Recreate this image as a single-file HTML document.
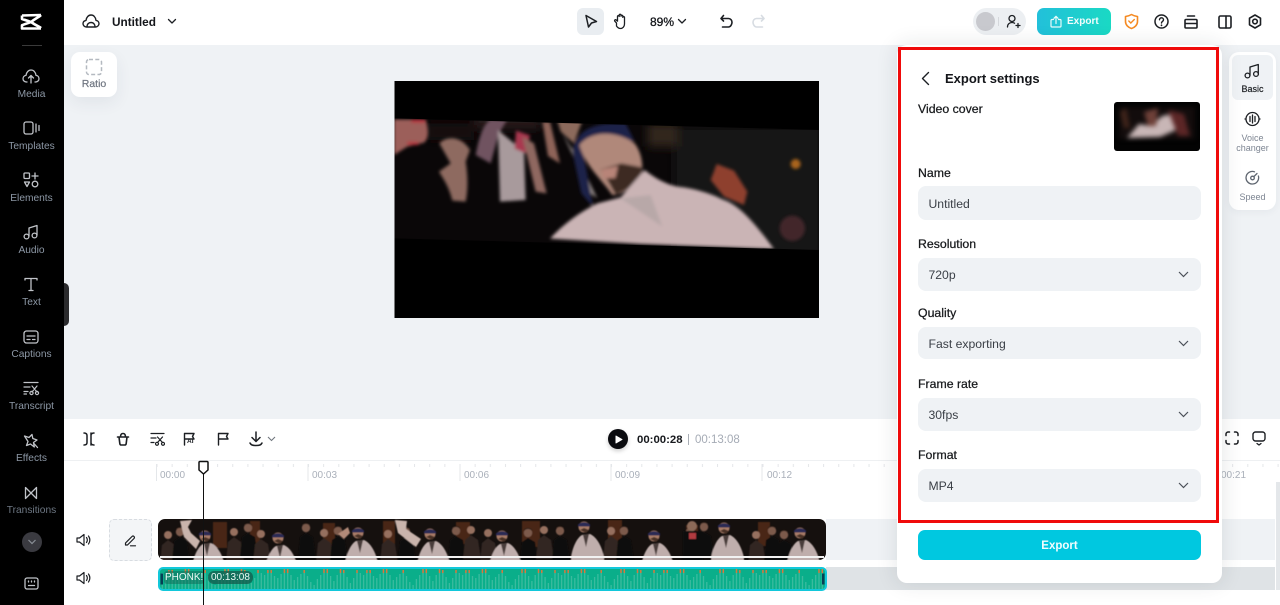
<!DOCTYPE html>
<html lang="en"><head><meta charset="utf-8"><title>Export settings</title>
<style>
html,body{margin:0;padding:0;width:1280px;height:605px;overflow:hidden;background:#fff;font-family:"Liberation Sans",sans-serif}
#r{position:relative;width:1280px;height:605px;overflow:hidden}
#r div,#r svg,#r span{position:absolute}
.t{white-space:nowrap;line-height:14px}
.s{left:0;width:63px;text-align:center;font-size:10.2px;color:#8d98a6}
.i{fill:none;stroke:#c0c3c8;stroke-width:1.3;stroke-linecap:round;stroke-linejoin:round}
.k{fill:none;stroke:#1c1f23;stroke-width:1.6;stroke-linecap:round;stroke-linejoin:round}
.lb{left:918px;font-size:12.3px;color:#17191c;-webkit-text-stroke:.25px #17191c}
.f{left:918px;width:283px;background:#eff2f5;border-radius:8px}
.v{left:928.5px;font-size:12.2px;color:#3a3f46}
.rl{font-size:10px;color:#aab0ba;top:469px}
</style></head><body><div id="r">

<!-- canvas -->
<div style="left:64px;top:45px;width:1216px;height:374px;background:#eff2f5"></div>
<!-- top bar -->
<div style="left:64px;top:0;width:1216px;height:45px;background:#fff"></div>

<!-- sidebar -->
<div style="left:0;top:0;width:64px;height:605px;background:#000"></div>
<div style="left:64px;top:283px;width:5px;height:43px;background:#2b2b2d;border-radius:0 6px 6px 0"></div>
<svg style="left:20px;top:12px" width="24" height="20" viewBox="0 0 24 20"><path d="M2 3.500 21 3M2 3.500v3.500l9 3-9 3.200v3.300h19M21 3c-1 1.500-5 3-10 7 5 3.500 9 5 10 6M2 7c4 1 6 2 9 3" fill="none" stroke="#fff" stroke-width="2.600" stroke-linejoin="round"/></svg>
<div style="left:22px;top:45px;width:20px;height:1px;background:#3a3a3a"></div>

<svg class="i" style="left:22px;top:68px" width="18" height="16" viewBox="0 0 18 16"><path d="M5 14H4.500C2.500 14 1 12.500 1 10.700S2.400 7.600 4 7.400C4.400 4.200 6.500 2 9 2s4.600 2 5 5.400c1.700.2 3 1.500 3 3.300S15.500 14 13.500 14H13M9 15V8M6.500 10 9 7.500l2.500 2.500"/></svg>
<div class="t s" style="top:88px">Media</div>
<svg class="i" style="left:23px;top:120px" width="18" height="16" viewBox="0 0 18 16"><rect x="1" y="2" width="9" height="12" rx="2"/><path d="M13 4v8M16 5.500v5"/></svg>
<div class="t s" style="top:140px">Templates</div>
<svg class="i" style="left:23px;top:172px" width="16" height="16" viewBox="0 0 16 16"><rect x="1" y="1" width="5.500" height="5.500" rx="1"/><path d="M12 1v6M9 4h6M1.500 10h5L4 14.500z"/><circle cx="12" cy="12" r="2.800"/></svg>
<div class="t s" style="top:192px">Elements</div>
<svg class="i" style="left:23px;top:224px" width="16" height="16" viewBox="0 0 16 16"><circle cx="3.500" cy="12.500" r="2.400"/><circle cx="11.500" cy="11.500" r="2.400"/><path d="M6 12V4l8-2.500V11"/></svg>
<div class="t s" style="top:244px">Audio</div>
<svg class="i" style="left:24px;top:277px" width="14" height="15" viewBox="0 0 14 15"><path d="M1 3V1.500h12V3M7 1.500V13.500M5 13.500h4"/></svg>
<div class="t s" style="top:296px">Text</div>
<svg class="i" style="left:23px;top:330px" width="16" height="14" viewBox="0 0 16 14"><rect x="1" y="1" width="14" height="12" rx="2.500"/><path d="M4 6h8M4 9.500h3M9.500 9.500H12"/></svg>
<div class="t s" style="top:348px">Captions</div>
<svg class="i" style="left:23px;top:381px" width="17" height="15" viewBox="0 0 17 15"><path d="M1 1.500h14M1 6h6M1 10.500h4M1 13h2.500M9 5l5 6M14 5 9 11" stroke-width="1.200"/><circle cx="8.500" cy="12" r="1.600" stroke-width="1.200"/><circle cx="14" cy="12" r="1.600" stroke-width="1.200"/></svg>
<div class="t s" style="top:400px">Transcript</div>
<svg class="i" style="left:23px;top:433px" width="16" height="16" viewBox="0 0 16 16"><path d="M1.500 3 6 4.500 9 1.500l.8 4 4.200 1.500-3.500 2.500.8 4.500-3.800-3-4 1.500 1.500-4zM10.500 10l4 4.500"/></svg>
<div class="t s" style="top:452px">Effects</div>
<svg class="i" style="left:24px;top:486px" width="14" height="14" viewBox="0 0 14 14"><path d="M1.500 1.500 7 7l5.500-5.500v11L7 7l-5.500 5.500z"/></svg>
<div class="t s" style="top:504px;color:#6d7783">Transitions</div>
<div style="left:22px;top:532px;width:20px;height:20px;border-radius:50%;background:#3a3a40"></div>
<svg style="left:27px;top:539px" width="10" height="6" viewBox="0 0 10 6"><path d="M1.500 1 5 4.500 8.500 1" fill="none" stroke="#8a8f96" stroke-width="1.200"/></svg>
<svg class="i" style="left:24px;top:577px" width="15" height="13" viewBox="0 0 15 13"><rect x="1" y="1" width="13" height="11" rx="2"/><path d="M4.500 4v1M7.500 4v1M10.500 4v1M4.500 8.500h6"/></svg>

<!-- top bar left -->
<svg class="k" style="left:82px;top:13px" width="18" height="16" viewBox="0 0 18 16"><path d="M4.500 14C2.500 14 1 12.500 1 10.600S2.400 7.700 4 7.400C4.400 4.200 6.500 2 9 2s4.600 2 5 5.400c1.700.2 3 1.500 3 3.200S15.500 14 13.500 14zM5 14c0-3 1.800-4.500 4-4.500 2.500 0 4 1.800 4 4.500" stroke-width="1.400"/></svg>
<div class="t" style="left:112px;top:15px;font-size:11.800px;font-weight:700;color:#14161a">Untitled</div>
<svg class="k" style="left:167px;top:18px;stroke-width:1.300" width="10" height="7" viewBox="0 0 10 7"><path d="M1.500 1.500 5 5l3.500-3.500"/></svg>
<!-- Ratio -->
<div style="left:71px;top:52px;width:46px;height:45px;background:#fff;border-radius:9px;box-shadow:0 6px 16px rgba(40,60,80,.07)"></div>
<svg style="left:85px;top:58px" width="18" height="18" viewBox="0 0 18 18"><rect x="1.500" y="1.500" width="15" height="15" rx="2.500" fill="none" stroke="#b4b9c0" stroke-width="1.500" stroke-dasharray="4 2.300"/></svg>
<div class="t" style="left:71px;width:46px;text-align:center;top:77px;font-size:10.500px;color:#6f7580;-webkit-text-stroke:.2px #6f7580">Ratio</div>

<!-- top center -->
<div style="left:577px;top:8px;width:27px;height:27px;background:#e9edf1;border-radius:6px"></div>
<svg class="k" style="left:584px;top:14px" width="14" height="15" viewBox="0 0 14 15"><path d="M2 1.500 12.500 7.500 7.500 9 4.500 13zM2 1.500l2.500 11.500" stroke-width="1.500"/></svg>
<svg class="k" style="left:613px;top:13px" width="15" height="17" viewBox="0 0 15 17"><path d="M3.500 10 1.800 8.200c-.8-.9.500-2 1.400-1.200L4.500 8.200V3.500c0-1.200 1.700-1.200 1.700 0V2.200c0-1.200 1.800-1.200 1.800 0v1c0-1.200 1.800-1.200 1.800 0v1.200c0-1.100 1.700-1.100 1.700.1v6.500c0 2.500-1.800 4.500-4 4.500-2 0-3-1-4-2.500z" stroke-width="1.300"/></svg>
<div class="t" style="left:650px;top:15px;font-size:12px;color:#14161a;-webkit-text-stroke:.3px #14161a">89%</div>
<svg class="k" style="left:677px;top:18px;stroke-width:1.300" width="10" height="7" viewBox="0 0 10 7"><path d="M1.500 1.500 5 5l3.500-3.500"/></svg>
<svg class="k" style="left:719px;top:14px" width="14" height="15" viewBox="0 0 14 15"><path d="M4.500 1.500 2 4.500h7.500c2 0 3.500 1.700 3.500 3.800S11.500 13 9.500 13H3.500M2 4.500l2.500 2.500"/></svg>
<svg class="k" style="left:752px;top:14px;stroke:#d7dce2" width="14" height="15" viewBox="0 0 14 15"><path d="M9.500 1.500 12 4.500H4.500C2.500 4.500 1 6.200 1 8.300S2.500 13 4.500 13h6M12 4.500 9.500 7"/></svg>

<!-- top right -->
<div style="left:973px;top:8px;width:53px;height:27px;background:#eceff2;border-radius:14px"></div>
<div style="left:976px;top:12px;width:19px;height:19px;background:#c8c9ce;border-radius:50%"></div>
<div style="left:998px;top:17px;width:1px;height:9px;background:#d5d8dc"></div>
<svg class="k" style="left:1006px;top:14px" width="15" height="15" viewBox="0 0 15 15"><circle cx="6" cy="4.500" r="3" stroke-width="1.300"/><path d="M1.500 13c0-2.800 2-4.500 4.500-4.500 1 0 1.800.2 2.500.7M10 11.500h4M12 9.500v4" stroke-width="1.300"/></svg>
<div style="left:1037px;top:8px;width:74px;height:27px;border-radius:7px;background:linear-gradient(90deg,#22c0da,#1ad9c4)"></div>
<svg style="left:1050px;top:15px" width="12" height="13" viewBox="0 0 12 13"><path d="M3.500 4.500H2c-.5 0-1 .5-1 1V11c0 .6.500 1 1 1h8c.5 0 1-.4 1-1V5.500c0-.5-.5-1-1-1H8.500M6 8.500V1.500M4 3.300 6 1.300l2 2" fill="none" stroke="#e8fbfa" stroke-width="1.200" stroke-linecap="round" stroke-linejoin="round"/></svg>
<div class="t" style="left:1067px;top:15px;font-size:10px;color:#f2fdfc;font-weight:700">Export</div>
<svg style="left:1124px;top:13px" width="15" height="17" viewBox="0 0 15 17"><path d="M7.500 1.500c2 1.200 3.800 1.800 6 2v5c0 3.500-2.800 6-6 7-3.200-1-6-3.500-6-7v-5c2.200-.2 4-.8 6-2z" fill="none" stroke="#f58a22" stroke-width="1.600" stroke-linejoin="round"/><path d="M4.800 8 6.800 10l3.500-3.500" fill="none" stroke="#f58a22" stroke-width="1.400" stroke-linecap="round"/></svg>
<svg class="k" style="left:1154px;top:14px" width="15" height="15" viewBox="0 0 15 15"><circle cx="7.500" cy="7.500" r="6.500" stroke-width="1.500"/><path d="M5.500 5.800c0-1.200 1-2 2-2s2 .8 2 1.900c0 1.700-2 1.700-2 3.300" stroke-width="1.400"/><path d="M7.500 11.200v.2" stroke-width="1.700"/></svg>
<svg class="k" style="left:1184px;top:15px" width="14" height="14" viewBox="0 0 14 14"><path d="M3.500 1h7M2 4.500h10M2 4.500c-.6 0-1 .5-1 1V12c0 .6.400 1 1 1h10c.6 0 1-.4 1-1V5.500c0-.5-.4-1-1-1M1 8.500h12"/></svg>
<svg class="k" style="left:1218px;top:15px" width="14" height="14" viewBox="0 0 14 14"><rect x="1" y="1" width="12" height="12" rx="1.500"/><path d="M8 1v12"/></svg>
<svg class="k" style="left:1248px;top:14px" width="14" height="15" viewBox="0 0 14 15"><path d="M7 1l5.500 3.200v6.600L7 14l-5.500-3.200V4.200z"/><circle cx="7" cy="7.500" r="2.300"/></svg>

<!-- video preview -->
<svg style="left:394px;top:80px" width="426" height="239" viewBox="0 0 1278 717">
<defs><clipPath id="b"><path d="M1.500 115 1275 150V510L1.500 475z"/></clipPath><filter id="bl" x="-10%" y="-10%" width="120%" height="120%"><feGaussianBlur stdDeviation="5"/></filter><filter id="bl2" x="-20%" y="-20%" width="140%" height="140%"><feGaussianBlur stdDeviation="14"/></filter></defs>
<rect x="1.500" y="3" width="1273.500" height="711" fill="#000"/>
<g clip-path="url(#b)">
<rect width="1278" height="717" fill="#0a0708"/>
<g filter="url(#bl2)"><rect x="840" y="140" width="440" height="380" fill="#121513"/><rect x="760" y="130" width="90" height="70" fill="#33281a"/><rect x="240" y="105" width="200" height="40" fill="#2a1f1f"/><rect x="100" y="130" width="140" height="50" fill="#141010"/></g>
<g filter="url(#bl)">
<path d="M0 118H95C105 150 105 175 90 188L40 200 0 225z" fill="#9c5e5a"/>
<path d="M52 118h42v10H52zM40 186h34v9H40z" fill="#b8303c"/>
<path d="M136 190C160 165 205 170 228 210L215 245C222 290 222 330 215 365L175 362C165 320 150 300 135 275L170 250z" fill="#8e6a60"/>
<path d="M245 225C255 175 265 135 290 118H340L315 160 290 250z" fill="#6f5260"/>
<path d="M312 150 390 215 395 360 318 365z" fill="#a89a9c"/>
<path d="M366 152 408 166 396 220 362 206z" fill="#a83850"/>
<path d="M385 170 420 190 458 340 425 335z" fill="#8f6860"/>
<path d="M445 125 468 125 498 250 462 228z" fill="#8e6458"/>
<path d="M490 122H565L540 190 500 155z" fill="#8c6a5c"/>
<path d="M505 160 590 340 610 355 560 250z" fill="#8f8684"/>
<path d="M535 215C545 150 600 125 695 130L722 185 600 165 570 230 598 382 562 340z" fill="#1e2048"/>
<path d="M556 195C590 152 665 150 722 190 745 220 750 265 740 295 700 335 675 345 655 345 625 300 575 260 556 195z" fill="#b0887a"/>
<path d="M620 268 682 250 746 262 735 310 665 345 640 300z" fill="#3c2b22"/>
<path d="M622 268 672 258 664 294 628 296z" fill="#b88478"/>
<path d="M468 476C510 430 560 395 610 370L680 352 752 270C790 300 830 320 870 322 920 330 960 345 985 358 1040 375 1090 440 1140 507L740 492z" fill="#cab4b5"/>
<path d="M680 355 805 440 770 345z" fill="#b8a8a8"/>
<path d="M950 300 968 252 1020 272 1060 335 1050 375 990 350z" fill="#8e3f2e"/>
<circle cx="1195" cy="445" r="38" fill="#43252a"/>
<circle cx="1205" cy="252" r="15" fill="#a8641c"/>
</g>
</g>
</svg>

<!-- timeline toolbar -->
<svg class="k" style="left:82px;top:432px" width="14" height="14" viewBox="0 0 14 14"><path d="M2 1c2 0 3 1 3 2.500v7C5 12 4 13 2 13M12 1c-2 0-3 1-3 2.500v7c0 1.500 1 2.500 3 2.500M9 1v12" stroke-width="1.500"/></svg>
<svg class="k" style="left:116px;top:432px" width="14" height="14" viewBox="0 0 14 14"><path d="M1.500 5h11M3 5l.8 6.500c.1.900.7 1.500 1.500 1.500h3.400c.8 0 1.400-.6 1.500-1.500L11 5M4.500 5C4.500 2.800 5.500 1.500 7 1.500S9.500 2.800 9.500 5"/></svg>
<svg class="k" style="left:150px;top:432px" width="15" height="14" viewBox="0 0 15 14"><path d="M1 1.500h13M1 6h5M1 10.500h3M7.500 5l5 5.500M12.500 5l-5 5.500" stroke-width="1.200"/><circle cx="7" cy="11.800" r="1.500" stroke-width="1.200"/><circle cx="13" cy="11.800" r="1.500" stroke-width="1.200"/></svg>
<svg class="k" style="left:183px;top:432px" width="13" height="14" viewBox="0 0 13 14"><path d="M1.500 13V1.500H11L9.500 4.500 11 7H1.500" stroke-width="1.400"/></svg>
<div class="t" style="left:187px;top:438px;font-size:6.500px;line-height:8px;font-weight:700;color:#1c1f23">AI</div>
<svg class="k" style="left:217px;top:432px" width="13" height="14" viewBox="0 0 13 14"><path d="M1.500 13V1.500H11L9.500 4.500 11 7H1.500" stroke-width="1.400"/></svg>
<svg class="k" style="left:249px;top:431px" width="14" height="16" viewBox="0 0 14 16"><path d="M7 1v9M3 6.500 7 10.500l4-4M1 12c1 2 2.500 2.500 6 2.500s5-.5 6-2.500" stroke-width="1.500"/></svg>
<svg style="left:267px;top:436px" width="9" height="6" viewBox="0 0 9 6"><path d="M1 1l3.500 3.500L8 1" fill="none" stroke="#70767e" stroke-width="1.100"/></svg>

<div style="left:608px;top:429px;width:20px;height:20px;border-radius:50%;background:#0a0b0f;box-shadow:0 2px 4px rgba(0,0,0,.2)"></div>
<svg style="left:615px;top:435px" width="8" height="9" viewBox="0 0 8 9"><path d="M1 1v7l6-3.500z" fill="#fff" stroke="#fff" stroke-linejoin="round"/></svg>
<div class="t" style="left:637px;top:433px;font-size:11.400px;font-weight:700;color:#17191d">00:00:28</div>
<div style="left:688px;top:434px;width:1px;height:11px;background:#a8adb5"></div>
<div class="t" style="left:695px;top:433px;font-size:11.500px;color:#a5abb5">00:13:08</div>
<svg class="k" style="left:1225px;top:431px" width="14" height="14" viewBox="0 0 14 14"><path d="M1 4.500V3c0-1 1-2 2-2h1.500M9.500 1H11c1 0 2 1 2 2v1.500M13 9.500V11c0 1-1 2-2 2H9.500M4.500 13H3c-1 0-2-1-2-2V9.500" stroke-width="1.500"/></svg>
<svg class="k" style="left:1252px;top:431px" width="14" height="15" viewBox="0 0 14 15"><rect x="1" y="1" width="12" height="9" rx="2.500" stroke-width="1.400"/><path d="M5 12.500l2 1.500 2-1.500" stroke-width="1.300"/></svg>

<!-- ruler -->
<div style="left:64px;top:460px;width:1216px;height:1px;background:#eef0f2"></div>
<svg style="left:150px;top:461px" width="1130" height="20" viewBox="0 0 1130 20"><defs><pattern id="tk" width="15.150" height="20" patternUnits="userSpaceOnUse" x="6.500"><rect width="1" height="3" y="3" fill="#e4e6e9"/></pattern></defs><rect width="1130" height="20" fill="url(#tk)"/><path d="M6.500 3v17M158 3v17M310 3v17M461 3v17M612 3v17M1067 3v17" stroke="#e4e7ea" fill="none"/></svg>
<div class="t rl" style="left:160px">00:00</div>
<div class="t rl" style="left:312px">00:03</div>
<div class="t rl" style="left:464px">00:06</div>
<div class="t rl" style="left:615px">00:09</div>
<div class="t rl" style="left:767px">00:12</div>
<div class="t rl" style="left:1221px">00:21</div>

<!-- track rows -->
<div style="left:826px;top:519px;width:449px;height:41px;background:#eff2f5"></div>
<div style="left:826px;top:567px;width:449px;height:23px;background:#dfe3e6"></div>
<div style="left:1276px;top:482px;width:4px;height:108px;background:#e4e7ea"></div>
<svg class="k" style="left:76px;top:533px" width="15" height="14" viewBox="0 0 15 14"><path d="M1 5v4h2.500L8 12.500v-11L3.500 5zM10.500 4.500c1 1.500 1 3.500 0 5M12.500 3c1.700 2.500 1.700 5.500 0 8" stroke-width="1.200"/></svg>
<svg class="k" style="left:76px;top:571px" width="15" height="14" viewBox="0 0 15 14"><path d="M1 5v4h2.500L8 12.500v-11L3.500 5zM10.500 4.500c1 1.500 1 3.500 0 5M12.500 3c1.700 2.500 1.700 5.500 0 8" stroke-width="1.200"/></svg>
<div style="left:109px;top:519px;width:41px;height:40px;background:#f3f5f7;border:1px dashed #d8dce1;border-radius:5px"></div>
<svg class="k" style="left:124px;top:534px" width="13" height="13" viewBox="0 0 13 13"><path d="M1.500 9 8 2.500c.6-.6 1.400-.6 2 0s.6 1.400 0 2L3.500 11H1.500zM6.500 11.800h5" stroke-width="1.200"/></svg>

<!-- video track -->
<svg style="left:158px;top:519px" width="669" height="42" viewBox="0 0 669 42">
<defs>
<clipPath id="vc"><rect width="668" height="41" rx="7"/></clipPath>
<filter id="sf" x="-2%" y="-5%" width="104%" height="110%"><feGaussianBlur stdDeviation=".45"/></filter>
<g id="m"><path d="M1 38C3 26 8 18 12 16L20 15C27 18 32 28 34 38V48H1z" fill="#bfaeac"/><path d="M13 16l3 12 3-13z" fill="#4a3c3a"/><circle cx="14" cy="8" r="5.500" fill="#a87c68"/><path d="M8 5.500c3-3 9-3 12 0v2H8z" fill="#2a2c55"/><path d="M10 11 14 9 19 11 16 14z" fill="#4a3328"/></g>
<g id="p"><path d="M0 41 2 20 8 16 15 20 18 41z" fill="#0f0c0b"/><circle cx="8" cy="11" r="4.200" fill="#7c5a4c"/><path d="M4 8.500c2-2 6-2 8 0v-1c-2-2-6-2-8 0z" fill="#2a1a14"/></g>
<g id="q"><path d="M0 41 2 22 8 17 15 22 18 41z" fill="#332522"/><circle cx="8" cy="12" r="4" fill="#96705f"/></g>
</defs>
<g clip-path="url(#vc)">
<rect width="668" height="41" fill="#15100e"/>
<g filter="url(#sf)">
<g fill="#4a2817"><rect x="55" y="3" width="14" height="26"/><rect x="92" y="2" width="10" height="24"/><rect x="165" y="4" width="12" height="26"/><rect x="225" y="2" width="12" height="24"/><rect x="298" y="3" width="14" height="22"/><rect x="364" y="2" width="18" height="26"/><rect x="450" y="1" width="14" height="22"/><rect x="528" y="6" width="12" height="22"/><rect x="600" y="3" width="12" height="24"/></g>
<use href="#q" x="2" y="4"/><use href="#p" x="14" y="2"/><use href="#q" x="68" y="1"/><use href="#p" x="82" y="-2"/><use href="#q" x="95" y="3"/><use href="#p" x="140" y="-2"/><use href="#q" x="158" y="2"/><use href="#p" x="172" y="1"/><use href="#q" x="222" y="3"/><use href="#p" x="240" y="2"/><use href="#p" x="290" y="1"/><use href="#q" x="305" y="-1"/><use href="#q" x="322" y="2"/><use href="#p" x="362" y="3"/><use href="#q" x="378" y="-1"/><use href="#p" x="394" y="1"/><use href="#q" x="445" y="0"/><use href="#p" x="458" y="1"/><use href="#p" x="524" y="2"/><use href="#p" x="538" y="-3"/><use href="#q" x="590" y="4"/><use href="#p" x="606" y="1"/><use href="#p" x="618" y="5"/>
<path d="M22 2 34 1 30 8 33 14 42 22 38 30 26 18z" fill="#c9b4ac"/>
<use href="#m" x="33" y="9"/>
<use href="#m" x="106" y="11"/>
<path d="M180 15 190 8 192 14 186 20z" fill="#b38a78"/>
<use href="#m" x="186" y="6"/>
<path d="M237 1 249 2 248 10 263 20 258 28 240 14z" fill="#c9b4ac"/>
<use href="#m" x="258" y="7"/>
<use href="#m" x="330" y="9"/>
<use href="#m" x="412" y="0"/>
<use href="#m" x="482" y="9"/>
<path d="M525 12h20v29h-20z" fill="#0c0a09"/><circle cx="534" cy="7" r="5" fill="#8c6a58"/>
<rect x="531" y="14" width="7" height="6" fill="#b23a40"/>
<use href="#m" x="552" y="1"/>
<use href="#m" x="628" y="6"/>
</g>
<rect x="2" y="37" width="664" height="2" fill="#f2f2f2"/>
</g>
</svg>

<!-- audio track -->
<svg style="left:158px;top:567px" width="669" height="24" viewBox="0 0 669 24">
<defs>
<pattern id="w" width="99" height="24" patternUnits="userSpaceOnUse">
<path d="M1 6V22M4.300 6V22M7.600 8V22M10.900 6V22M14.200 6V22M17.500 9V22M20.800 11V22M24.100 7V22M27.400 6V22M30.700 6V22M34 8V22M37.300 13V22M40.600 10V22M43.900 7V22M47.200 6V22M50.500 9V22M53.800 15V22M57.100 18V22M60.400 12V22M63.700 8V22M67 6V22M70.300 6V22M73.600 9V22M76.900 14V22M80.200 8V22M83.500 6V22M86.800 6V22M90.100 10V22M93.400 16V22M96.700 11V22" stroke="#3abb9e" stroke-width="1.300" fill="none"/>
<path d="M1 3V6M10.900 3V6M14.200 3V6M27.400 2V6M30.700 2V6M47.200 3V6M67 2V6M70.300 2V6M83.500 2V6M86.800 3V6" stroke="#d9773e" stroke-width="1.500" fill="none"/>
</pattern>
</defs>
<rect x="1" y="1" width="667" height="22" rx="4" fill="#0aae8a" stroke="#12c8da" stroke-width="2"/>
<rect x="3" y="2" width="663" height="20" fill="url(#w)"/>
<rect x="2.500" y="6.500" width="2.500" height="11" fill="#063f55"/>
<rect x="664" y="6.500" width="2.500" height="11" fill="#063f55"/>
</svg>
<div style="left:164px;top:571px;width:40px;height:13px;background:rgba(20,110,90,.55);border-radius:3px"></div>
<div style="left:208px;top:571px;width:45px;height:13px;background:rgba(20,90,75,.75);border-radius:6px"></div>
<div class="t" style="left:165px;top:571px;font-size:10px;color:#eafaf5">PHONK!</div>
<div class="t" style="left:211px;top:571px;font-size:10px;color:#eafaf5">00:13:08</div>

<!-- playhead -->
<div style="left:203px;top:465px;width:1px;height:140px;background:#111"></div>
<svg style="left:197px;top:460px" width="13" height="16" viewBox="0 0 13 16"><path d="M2 2.500c0-.6.400-1 1-1h7c.6 0 1 .4 1 1V10l-4.500 4L2 10z" fill="#fff" stroke="#111" stroke-width="1.500" stroke-linejoin="round"/></svg>

<!-- right rail -->
<div style="left:1229px;top:52px;width:47px;height:158px;background:#fff;border-radius:10px;box-shadow:0 2px 8px rgba(40,60,80,.05)"></div>
<div style="left:1232px;top:55px;width:41px;height:45px;background:#eff2f5;border-radius:6px"></div>
<svg class="k" style="left:1244px;top:63px" width="16" height="16" viewBox="0 0 16 16"><circle cx="3.500" cy="12.500" r="2.400" stroke-width="1.300"/><circle cx="12" cy="11" r="2.400" stroke-width="1.300"/><path d="M6 12.500V4l8.300-2.500V11" stroke-width="1.300"/></svg>
<div class="t" style="left:1229px;width:47px;text-align:center;top:82px;font-size:9px;color:#1c1f23;-webkit-text-stroke:.2px #1c1f23">Basic</div>
<svg class="k" style="left:1244px;top:111px" width="17" height="16" viewBox="0 0 17 16"><path d="M2 8a6.500 6.500 0 0 1 13 0M15 8a6.500 6.500 0 0 1-13 0M1 8h.5M15.500 8h.5M6 5.500v5M8.500 4v8M11 5.500v5" stroke-width="1.300"/></svg>
<div class="t" style="left:1229px;width:47px;text-align:center;top:133px;font-size:9px;line-height:10px;color:#7d8592">Voice<br>changer</div>
<svg class="k" style="left:1245px;top:170px;stroke:#5f6670" width="15" height="15" viewBox="0 0 15 15"><path d="M9.500 1.800A6.300 6.300 0 1 0 13.400 6" stroke-width="1.300"/><circle cx="7.500" cy="8" r="1.800" stroke-width="1.300"/><path d="M9 6.500 12 3.500" stroke-width="1.300"/></svg>
<div class="t" style="left:1229px;width:47px;text-align:center;top:190px;font-size:9px;color:#7d8592">Speed</div>

<!-- export panel -->
<div style="left:897px;top:45px;width:325px;height:538px;background:#fff;border-radius:10px;box-shadow:0 0 22px rgba(30,40,50,.12)"></div>
<svg class="k" style="left:920px;top:71px" width="11" height="15" viewBox="0 0 11 15"><path d="M8.500 1.500 2.500 7.500l6 6" stroke-width="1.400"/></svg>
<div class="t" style="left:945px;top:72px;font-size:13px;font-weight:700;color:#14161a">Export settings</div>
<div class="t lb" style="top:102px">Video cover</div>
<svg style="left:1114px;top:102px" width="86" height="49" viewBox="0 0 86 49"><rect width="86" height="49" rx="3" fill="#030303"/><g style="filter:blur(2.500px)"><rect x="5" y="5" width="76" height="32" fill="#120c0c"/><path d="M13 36 25 22 37 24 48 14 58 12 62 28 46 35z" fill="#c8b6b6"/><path d="M30 10 44 6 42 24 34 24z" fill="#6e4038"/><path d="M54 8 70 12 76 34 64 34z" fill="#5c2626"/><path d="M6 10 12 6 16 26 10 26z" fill="#40241a"/></g></svg>

<div class="t lb" style="top:166px">Name</div>
<div class="f" style="top:186px;height:34px"></div>
<div class="t v" style="top:197px">Untitled</div>

<div class="t lb" style="top:237px">Resolution</div>
<div class="f" style="top:258px;height:33px"></div>
<div class="t v" style="top:268px">720p</div>
<svg style="left:1178px;top:271px" width="11" height="7" viewBox="0 0 11 7"><path d="M1 1l4.500 4.500L10 1" fill="none" stroke="#4a5058" stroke-width="1.200"/></svg>

<div class="t lb" style="top:306px">Quality</div>
<div class="f" style="top:327px;height:32px"></div>
<div class="t v" style="top:337px">Fast exporting</div>
<svg style="left:1178px;top:340px" width="11" height="7" viewBox="0 0 11 7"><path d="M1 1l4.500 4.500L10 1" fill="none" stroke="#4a5058" stroke-width="1.200"/></svg>

<div class="t lb" style="top:377px">Frame rate</div>
<div class="f" style="top:398px;height:33px"></div>
<div class="t v" style="top:408px">30fps</div>
<svg style="left:1178px;top:411px" width="11" height="7" viewBox="0 0 11 7"><path d="M1 1l4.500 4.500L10 1" fill="none" stroke="#4a5058" stroke-width="1.200"/></svg>

<div class="t lb" style="top:448px">Format</div>
<div class="f" style="top:469px;height:33px"></div>
<div class="t v" style="top:479px">MP4</div>
<svg style="left:1178px;top:482px" width="11" height="7" viewBox="0 0 11 7"><path d="M1 1l4.500 4.500L10 1" fill="none" stroke="#4a5058" stroke-width="1.200"/></svg>

<div style="left:918px;top:530px;width:283px;height:30px;background:#00c8e0;border-radius:7px"></div>
<div class="t" style="left:918px;width:283px;text-align:center;top:539px;font-size:11.500px;font-weight:700;color:#f2fdfe">Export</div>

<!-- red annotation -->
<div style="left:898px;top:47px;width:315px;height:470px;border:3px solid #f00a0a"></div>
</div></body></html>
